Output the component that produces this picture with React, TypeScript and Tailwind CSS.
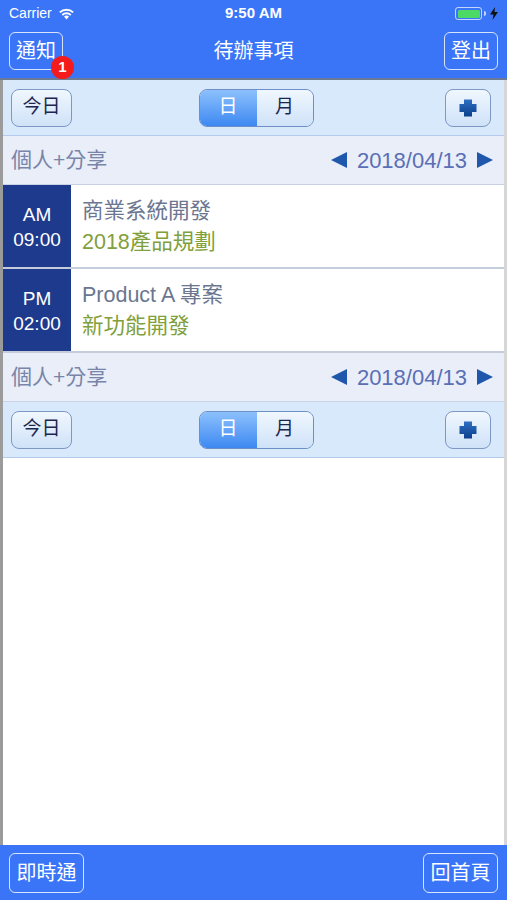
import { Fragment } from "react";

const font = { fontFamily: "'Liberation Sans', 'Noto Sans CJK TC', sans-serif" };

const events = [
  { ampm: "AM", time: "09:00", title: "商業系統開發", sub: "2018產品規劃" },
  { ampm: "PM", time: "02:00", title: "Product A 專案", sub: "新功能開發" },
];

function Toolbar() {
  return (
    <div className="h-[56px] bg-[#d8e9fb] flex items-center justify-between pl-[8px] pr-[13px] border-b border-[#b4cbee]">
      <button className="w-[61px] h-[38px] rounded-[8px] border border-[#7e98c6] bg-gradient-to-b from-[#f0f7fe] to-[#cfe2f8] text-[19px] text-[#1c2650]">
        今日
      </button>
      <div className="flex w-[115px] h-[38px] rounded-[8px] border border-[#6d8fc6] overflow-hidden mr-[5px]">
        <div className="w-[57px] flex items-center justify-center bg-gradient-to-b from-[#8cc0fc] to-[#3c88f1] text-white text-[19px]">
          日
        </div>
        <div className="flex-1 flex items-center justify-center bg-gradient-to-b from-[#f0f7fe] to-[#cfe2f8] text-[#1c2650] text-[19px]">
          月
        </div>
      </div>
      <button className="w-[46px] h-[38px] rounded-[8px] border border-[#7e98c6] bg-gradient-to-b from-[#f0f7fe] to-[#cfe2f8] flex items-center justify-center">
        <svg width="20" height="20" viewBox="0 0 20 20">
          <defs>
            <linearGradient id="pg" x1="0" y1="0" x2="0" y2="1">
              <stop offset="0" stopColor="#2f6fc4" />
              <stop offset="1" stopColor="#0b3f8c" />
            </linearGradient>
          </defs>
          <path d="M6 1.5h8v4.5h4.5v8h-4.5v4.5h-8v-4.5h-4.5v-8h4.5z" fill="url(#pg)" />
        </svg>
      </button>
    </div>
  );
}

function DateHeader() {
  return (
    <div className="h-[49px] bg-[#e9eef8] flex items-center justify-between pl-[8px] pr-[11px] border-b border-[#c9d2e4]">
      <span className="text-[21px] text-[#7884a8]">個人+分享</span>
      <div className="flex items-center gap-[10px]">
        <svg width="16" height="18" viewBox="0 0 16 18">
          <path d="M16 1 L0 9 L16 17 Z" fill="#1f57ad" />
        </svg>
        <span className="text-[22px] text-[#5a6fb6]">2018/04/13</span>
        <svg width="16" height="18" viewBox="0 0 16 18">
          <path d="M0 1 L16 9 L0 17 Z" fill="#1f57ad" />
        </svg>
      </div>
    </div>
  );
}

export default function App() {
  return (
    <div className="w-[507px] h-[900px] flex flex-col bg-white overflow-hidden" style={font}>
      {/* Status + nav */}
      <div className="bg-[#3a75f7] h-[80px] flex flex-col border-b-2 border-[#6b7b96]">
        <div className="h-[27px] flex items-center justify-between px-[9px] text-white relative">
          <div className="flex items-center gap-[6px] text-[14px]">
            <span>Carrier</span>
            <svg width="17" height="12" viewBox="0 0 17 12">
              <path d="M8.5 11.5 L11 8.6 A3.8 3.8 0 0 0 6 8.6 Z" fill="white" />
              <path d="M3.6 6.3 A7 7 0 0 1 13.4 6.3 L12.1 7.7 A5.1 5.1 0 0 0 4.9 7.7 Z" fill="white" />
              <path d="M1.2 3.7 A10.5 10.5 0 0 1 15.8 3.7 L14.5 5.1 A8.6 8.6 0 0 0 2.5 5.1 Z" fill="white" />
            </svg>
          </div>
          <span className="absolute left-0 right-0 text-center text-[15px] font-bold">9:50 AM</span>
          <div className="flex items-center gap-[2px]">
            <div className="w-[27px] h-[13px] rounded-[3px] border border-white/70 p-[1.5px]">
              <div className="w-full h-full rounded-[1.5px] bg-[#4cd964]" />
            </div>
            <div className="w-[2px] h-[5px] bg-white/70 rounded-r" />
            <svg width="8" height="13" viewBox="0 0 8 13" className="ml-[2px]">
              <path d="M5 0 L0 7.5 H3.5 L2.5 13 L8 5 H4.5 Z" fill="#111" />
            </svg>
          </div>
        </div>
        <div className="flex-1 flex items-center justify-between px-[9px] pb-[3px] relative">
          <div className="relative">
            <button className="w-[54px] h-[38px] rounded-[6px] border border-white/80 text-white text-[20px]">
              通知
            </button>
            <span className="absolute left-[42px] top-[24px] w-[23px] h-[23px] rounded-full bg-[#f31b1b] text-white text-[15px] font-bold flex items-center justify-center">
              1
            </span>
          </div>
          <span className="absolute left-0 right-0 text-center text-white text-[20px] pointer-events-none">待辦事項</span>
          <button className="w-[54px] h-[38px] rounded-[6px] border border-white/80 text-white text-[20px]">
            登出
          </button>
        </div>
      </div>

      {/* Content */}
      <div className="flex-1 flex flex-col border-l-[3px] border-l-[#9b9b9b] border-r-[3px] border-r-[#d7d7d7] bg-white">
        <Toolbar />
        <DateHeader />
        {events.map((e) => (
          <Fragment key={e.time}>
            <div className="h-[84px] flex border-b-2 border-[#c5ccdb]">
              <div className="w-[68px] bg-[#1e3a8c] flex flex-col items-center justify-center text-white text-[19px] leading-[25px] pt-[1px]">
                <span>{e.ampm}</span>
                <span>{e.time}</span>
              </div>
              <div className="flex-1 flex flex-col justify-center pl-[11px] gap-[4px] pt-[2px]">
                <span className="text-[21.5px] text-[#6b7690] leading-[27px]">{e.title}</span>
                <span className="text-[21.5px] text-[#7fa03a] leading-[27px]">{e.sub}</span>
              </div>
            </div>
          </Fragment>
        ))}
        <DateHeader />
        <Toolbar />
      </div>

      {/* Bottom bar */}
      <div className="h-[55px] bg-[#3a75f7] flex items-center justify-between px-[9px]">
        <button className="w-[75px] h-[40px] rounded-[6px] border border-white/80 text-white text-[20px]">
          即時通
        </button>
        <button className="w-[75px] h-[40px] rounded-[6px] border border-white/80 text-white text-[20px]">
          回首頁
        </button>
      </div>
    </div>
  );
}
